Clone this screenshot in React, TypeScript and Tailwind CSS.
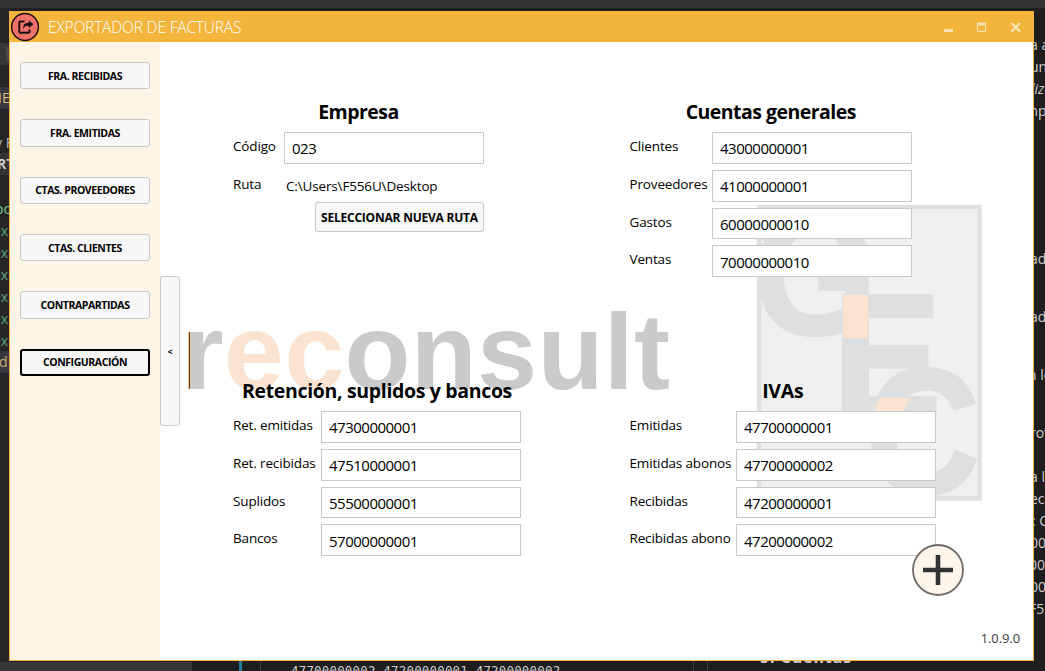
import React from "react";

type Field = { label: string; value: string };

const menu = ["FRA. RECIBIDAS", "FRA. EMITIDAS", "CTAS. PROVEEDORES", "CTAS. CLIENTES", "CONTRAPARTIDAS", "CONFIGURACIÓN"];

const cuentas: Field[] = [
  { label: "Clientes", value: "43000000001" },
  { label: "Proveedores", value: "41000000001" },
  { label: "Gastos", value: "60000000010" },
  { label: "Ventas", value: "70000000010" },
];
const retencion: Field[] = [
  { label: "Ret. emitidas", value: "47300000001" },
  { label: "Ret. recibidas", value: "47510000001" },
  { label: "Suplidos", value: "55500000001" },
  { label: "Bancos", value: "57000000001" },
];
const ivas: Field[] = [
  { label: "Emitidas", value: "47700000001" },
  { label: "Emitidas abonos", value: "47700000002" },
  { label: "Recibidas", value: "47200000001" },
  { label: "Recibidas abono", value: "47200000002" },
];

const leftCode = [
  { t: "IE", c: "top-[87px] bg-[#37373d] text-[#d7ba7d] indent-[-2px]" },
  { t: "v F", c: "top-[132px] text-[#bdbdbd] indent-[-5px]" },
  { t: "RT", c: "top-[153px] bg-[#333] text-[#ccc] font-bold indent-[-3px]" },
  { t: "oc", c: "top-[198px] text-[#73c991] indent-[-5px]" },
  { t: "exc", c: "top-[220px] text-[#5da57c] indent-[-7px]" },
  { t: "exc", c: "top-[242px] text-[#5da57c] indent-[-7px]" },
  { t: "exc", c: "top-[264px] text-[#5da57c] indent-[-7px]" },
  { t: "exc", c: "top-[286px] text-[#5da57c] indent-[-7px]" },
  { t: "exc", c: "top-[308px] text-[#5da57c] indent-[-7px]" },
  { t: "exc", c: "top-[330px] text-[#5da57c] indent-[-7px]" },
  { t: "d", c: "top-[351px] bg-[#37373d] text-[#c9ad78] indent-[-1px]" },
];
const rightCode = [
  { t: "a a", c: "top-[34px] indent-[-1px]" },
  { t: "un", c: "top-[56px] indent-[-1px]" },
  { t: "liza", c: "top-[78px] italic" },
  { t: "mp", c: "top-[100px] indent-[-6px]" },
  { t: "ad", c: "top-[248px] indent-[-1px]" },
  { t: "ad", c: "top-[306px] indent-[-1px]" },
  { t: "n lo", c: "top-[364px] indent-[-3px]" },
  { t: "rov", c: "top-[422px] indent-[-1px]" },
  { t: "a l", c: "top-[466px] indent-[-1px]" },
  { t: "eci", c: "top-[488px] indent-[-1px]" },
  { t: ": C", c: "top-[510px] indent-[1px]" },
  { t: "000", c: "top-[532px] indent-[-1px]" },
  { t: "000", c: "top-[554px] indent-[-2px]" },
  { t: "000", c: "top-[576px] indent-[-1px]" },
  { t: "F55", c: "top-[598px] indent-[-2px]" },
];

function Desktop() {
  return (
    <div className="absolute inset-0 bg-[#1e1e1e] text-[14px]">
      <div className="h-2 bg-[#333]" />
      <div className="absolute left-0 top-2 h-[663px] w-[10px] bg-[#252526]" />
      <div className="absolute left-0 top-[43px] h-[22px] w-[10px] bg-[#373737]" />
      <div className="absolute left-[6px] top-[47px] h-[14px] w-[4px] bg-[#4a4a4a]" />
      {leftCode.map((l, i) => (
        <div key={i} className={"absolute left-0 h-[22px] w-[10px] overflow-hidden whitespace-nowrap leading-[22px] " + l.c}>
          {l.t}
        </div>
      ))}
      {rightCode.map((l, i) => (
        <div key={i} className={"absolute left-[1031px] h-[22px] w-[14px] overflow-hidden whitespace-nowrap leading-[22px] text-[#ccc] " + l.c}>
          {l.t}
        </div>
      ))}
      <div className="absolute left-0 top-[662px] h-[9px] w-48 bg-[#37373a]" />
      <div className="absolute left-[239px] top-[660px] h-[11px] w-[3px] bg-[#1b7f9c]" />
      <div className="absolute left-[260px] top-[660px] h-[11px] w-px bg-[#404040]" />
      <div className="absolute left-[693px] top-[660px] h-[11px] w-px bg-[#404040]" />
      <div className="absolute left-[707px] top-[660px] h-[11px] w-px bg-[#404040]" />
      <div className="absolute left-[291px] top-[662px] h-[9px] overflow-hidden whitespace-nowrap font-['DejaVu_Sans_Mono',monospace] text-[12.5px] leading-[18px] tracking-[0.17px] text-[#ccc]">
        47700000002,47200000001,47200000002
      </div>
      <div className="absolute left-[760px] top-[647px] text-[16px] font-bold leading-5 tracking-[0.9px] text-[#ccc]">5. Cuentas</div>
    </div>
  );
}

function Watermark() {
  return (
    <svg className="pointer-events-none absolute left-0 top-0" width="873" height="618" viewBox="160 42 873 618" fontFamily="Liberation Sans, sans-serif" fontWeight="bold">
      <rect x="759" y="207" width="220.5" height="291.5" fill="#f0f0f0" stroke="#dfe0e0" strokeWidth="4.5" />
      <g fill="#dfdfdf" stroke="#dfdfdf">
        <text transform="translate(752.5 334) scale(.925 1)" fontSize="174" strokeWidth="2.5">G</text>
        <text transform="translate(833 417.5) scale(.92 1)" fontSize="176" strokeWidth="4">E</text>
        <text transform="translate(865.5 493) scale(.885 1)" fontSize="179" strokeWidth="3">C</text>
      </g>
      <rect x="843" y="295" width="25" height="43" fill="#fbe3d2" />
      <path d="M879 398H910L902 414H873Z" fill="#fbe3d2" />
      <text x="181.5" y="388.5" fontSize="108" letterSpacing=".3" fill="#cacaca">
        r<tspan fill="#fbe3d2">ec</tspan>onsult
      </text>
      <rect x="188" y="332" width="1" height="57" fill="#f0c48c" />
      <rect x="189" y="332" width="1" height="57" fill="#7a3000" />
    </svg>
  );
}

function TextBox({ value }: { value: string }) {
  return (
    <div className="flex h-[31.75px] w-[200px] items-center border border-[#c8c8c8] bg-white pl-[7px] pt-[1.5px] text-[15px] tracking-[-0.5px]">{value}</div>
  );
}

function Label({ children }: { children: React.ReactNode }) {
  return <div className="whitespace-nowrap text-[13.5px] leading-[29px] tracking-[-0.15px]">{children}</div>;
}

function Section({ title, width, tracking, children }: { title: string; width: string; tracking: string; children: React.ReactNode }) {
  return (
    <section className={"h-[279px] " + width}>
      <h2 className={"h-[31px] whitespace-nowrap text-center text-[19.5px] font-bold leading-[22px] " + tracking}>{title}</h2>
      {children}
    </section>
  );
}

function Fields({ items }: { items: Field[] }) {
  return (
    <>
      {items.map((f) => (
        <div key={f.label} className="flex h-[37.75px] justify-between">
          <Label>{f.label}</Label>
          <TextBox value={f.value} />
        </div>
      ))}
    </>
  );
}

export default function App() {
  return (
    <div className="relative h-[671px] w-[1045px] overflow-hidden font-['Open_Sans','Noto_Sans',sans-serif] text-black">
      <Desktop />
      <div className="absolute left-[9px] top-[11px] flex h-[650px] w-[1025px] flex-col border border-[#f5b041] bg-white">
        <header className="flex h-[30px] shrink-0 items-center bg-[#f4b53d] text-white">
          <svg width="30" height="30" viewBox="0 0 30 30" className="shrink-0">
            <circle cx="15" cy="15" r="13.4" fill="#f0706a" stroke="#1c1010" strokeWidth="1.5" />
            <path d="M14.5 9.5H10.2Q9.3 9.5 9.3 10.5V19.8Q9.3 20.8 10.2 20.8H18.5Q19.5 20.8 19.5 19.8V17.5" fill="none" stroke="#1c1010" strokeWidth="2" />
            <path d="M13 17.2Q12.5 10.8 18.8 10.8V8.6L23.5 12.3L18.8 16V13.8Q14.5 13.5 13 17.2Z" fill="#1c1010" />
          </svg>
          <h1 className="ml-2 grow pt-[2px] text-[15.5px] font-light tracking-[-0.17px]">EXPORTADOR DE FACTURAS</h1>
          <svg width="80" height="12" viewBox="0 0 80 12" className="mr-[11px]" fill="none" stroke="#fbe3b4">
            <path d="M2 9.5H11" strokeWidth="3" />
            <path d="M35.5 2.5H43.5V10.5H35.5Z" />
            <path d="M35 3H44" strokeWidth="3" />
            <path d="M69.5 2L78 10.5M78 2L69.5 10.5" strokeWidth="2.3" />
          </svg>
        </header>
        <div className="flex grow">
          <nav className="flex w-[150px] shrink-0 flex-col gap-[30.05px] bg-[#fdf5e6] px-[10px] pt-5">
            {menu.map((m, i) => (
              <button
                key={m}
                className={
                  "flex h-[27.3px] shrink-0 items-center justify-center whitespace-nowrap rounded-[3px] bg-[#f7f7f7] pt-[2px] text-[10.5px] font-bold tracking-[-0.42px] " +
                  (i === 5 ? "border-2 border-black" : "border border-[#c8c8c8]")
                }
              >
                {m}
              </button>
            ))}
          </nav>
          <main className="relative flex grow items-center">
            <Watermark />
            <button className="relative h-[150px] w-5 shrink-0 rounded-[3px] border border-[#c8c8c8] bg-[#f7f7f7] pt-[2px] text-[9px] font-bold">&lt;</button>
            <div className="relative grid h-full grid-cols-[396.5px_1fr] content-start pl-[53px] pt-[59px]">
              <Section title="Empresa" width="w-[251px]" tracking="tracking-[-0.53px]">
                <div className="flex h-[37.75px] justify-between">
                  <Label>Código</Label>
                  <TextBox value="023" />
                </div>
                <div className="flex h-8 justify-between">
                  <Label>Ruta</Label>
                  <div className="w-[198px] whitespace-nowrap text-[13.5px] leading-8 tracking-[-0.15px]">C:\Users\F556U\Desktop</div>
                </div>
                <button className="ml-auto block h-[30px] w-[169px] whitespace-nowrap rounded-[3px] border border-[#c8c8c8] bg-[#f7f7f7] pt-[2px] text-[12px] font-bold tracking-[-0.22px]">
                  SELECCIONAR NUEVA RUTA
                </button>
              </Section>
              <Section title="Cuentas generales" width="w-[282.5px]" tracking="tracking-[-0.53px]">
                <Fields items={cuentas} />
              </Section>
              <Section title="Retención, suplidos y bancos" width="w-[288px]" tracking="tracking-[-0.34px]">
                <Fields items={retencion} />
              </Section>
              <Section title="IVAs" width="w-[306.5px]" tracking="tracking-[-0.3px]">
                <Fields items={ivas} />
              </Section>
            </div>
            <button className="absolute bottom-[64px] right-[69px] h-[52px] w-[52px]" aria-label="+">
              <svg width="52" height="52" viewBox="0 0 52 52">
                <circle cx="26" cy="26" r="25" fill="#fef6ea" fillOpacity=".95" stroke="#6d6a66" strokeWidth="1.8" />
                <path d="M11 26H41M26 11V41" stroke="#333" strokeWidth="4.6" />
              </svg>
            </button>
            <div className="absolute bottom-3 right-[13px] text-[13px] leading-5 tracking-[-0.1px] text-[#3c3c3c]">1.0.9.0</div>
          </main>
        </div>
      </div>
    </div>
  );
}
